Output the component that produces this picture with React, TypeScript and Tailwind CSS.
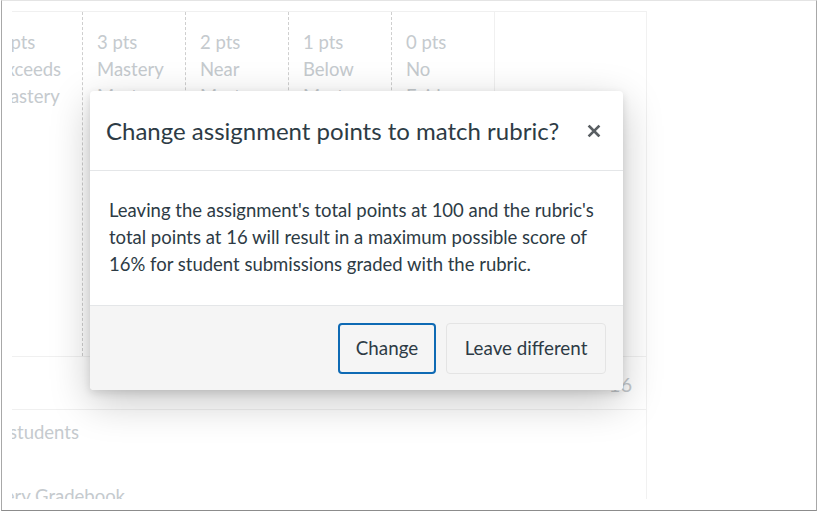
import React from "react";

const cols = [
  { pts: "3 pts", a: "Mastery", b: "Mastery" },
  { pts: "2 pts", a: "Near", b: "Mastery" },
  { pts: "1 pts", a: "Below", b: "Mastery" },
  { pts: "0 pts", a: "No", b: "Evidence" },
];

export default function App() {
  return (
    <div
      className="relative w-[818px] h-[512px] overflow-hidden bg-white"
      style={{ fontFamily: "Lato, 'Open Sans', sans-serif" }}
    >
      <div className="ml-[1px] w-[816px] h-[511px] border-l border-r border-b border-t border-l-[#a8a8a8] border-r-[#a8a8a8] border-b-[#8c8c8c] border-t-[#e4e4e4] pl-[10px] pt-[10px]">
        <div className="w-[635px] h-[488px] overflow-hidden border-r border-[#f1f1f1] text-[18.5px] leading-[27px] text-[#c5cace]">
          {/* header row */}
          <div className="flex h-[346px] border-t border-b border-[#f0f0f0]">
            <div className="w-[70px] overflow-hidden pt-[17px]">
              <div className="ml-[-17px] whitespace-nowrap">
                <div>4 pts</div>
                <div>Exceeds</div>
                <div className="ml-[-2px]">Mastery</div>
              </div>
            </div>
            {cols.map((c) => (
              <div
                key={c.pts}
                className="w-[103px] border-l border-dashed border-[#cfcfcf] pt-[17px] pl-[14px] whitespace-nowrap"
              >
                <div>{c.pts}</div>
                <div>{c.a}</div>
                <div>{c.b}</div>
              </div>
            ))}
            <div className="flex-1 border-l border-[#f0f0f0]" />
          </div>
          {/* total row */}
          <div className="flex h-[53px] border-b border-[#f0f0f0] items-center justify-end pr-[14px] text-[20px]">
            <span className="pt-[3px]">16</span>
          </div>
          {/* options */}
          <div className="pt-[9px] overflow-hidden">
            <div className="ml-[-3px] whitespace-nowrap">students</div>
            <div className="ml-[-48px] mt-[37px] whitespace-nowrap">Mastery Gradebook</div>
          </div>
        </div>
      </div>

      {/* modal */}
      <div className="absolute left-[90px] top-[91px] w-[533px] rounded-[4px] bg-white text-[#2d3b45] shadow-[0_12px_40px_rgba(0,0,0,0.22),0_3px_8px_rgba(0,0,0,0.12)] overflow-hidden">
        <div className="h-[80px] flex items-center justify-between pl-[16px] pr-[22px] border-b border-[#e4e6e8]">
          <h2 className="text-[24px] leading-[30px] font-normal pt-[1px]">
            Change assignment points to match rubric?
          </h2>
          <svg width="14" height="14" viewBox="0 0 14 14" className="mt-[1px]">
            <path d="M2.5 2.5 L11.5 11.5 M11.5 2.5 L2.5 11.5" stroke="#5a5f63" strokeWidth="2.6" strokeLinecap="square" />
          </svg>
        </div>
        <div className="pl-[19px] pr-[19px] pt-[26px] pb-[26px] text-[18.5px] leading-[27px] h-[134px]">
          Leaving the assignment's total points at 100 and the rubric's total points at 16 will result in a maximum possible score of 16% for student submissions graded with the rubric.
        </div>
        <div className="h-[85px] bg-[#f5f5f5] border-t border-[#e4e6e8] flex items-start justify-end gap-[10px] pt-[17px] pr-[17px]">
          <button className="h-[51px] w-[98px] rounded-[4px] border-2 border-[#0e6ab4] bg-[#f5f5f5] text-[18.8px] text-[#2d3b45]">
            Change
          </button>
          <button className="h-[51px] w-[160px] rounded-[4px] border border-[#e4e4e4] bg-[#f5f5f5] text-[18.8px] text-[#2d3b45]">
            Leave different
          </button>
        </div>
      </div>
    </div>
  );
}
